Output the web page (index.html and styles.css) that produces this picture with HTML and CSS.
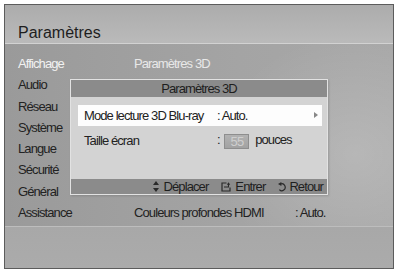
FILE: index.html
```html
<!DOCTYPE html>
<html lang="fr">
<head>
    <meta charset="UTF-8">
    <title>Paramètres</title>
    <link rel="stylesheet" href="styles.css">
</head>
<body>
    <div class="screen">
        <div class="title-bar">Paramètres</div>

        <div class="main">
            <ul class="menu">
                <li class="active">Affichage</li>
                <li>Audio</li>
                <li>Réseau</li>
                <li>Système</li>
                <li>Langue</li>
                <li>Sécurité</li>
                <li>Général</li>
                <li>Assistance</li>
            </ul>
            <div class="options">
                <div class="option dim">Paramètres 3D</div>
                <div class="option spacer"></div>
                <div class="option">
                    <span class="opt-name">Couleurs profondes HDMI</span>
                    <span class="opt-value">: Auto.</span>
                </div>
            </div>

            <!-- popup over the menu -->
            <div class="dialog">
                <div class="dialog-head">Paramètres 3D</div>
                <div class="dialog-body">
                    <div class="row selected">
                        <span class="row-name">Mode lecture 3D Blu-ray</span>
                        <span class="row-value">: Auto.</span>
                        <span class="arrow"></span>
                    </div>
                    <div class="row">
                        <span class="row-name">Taille écran</span>
                        <span class="row-value">: <span class="num-box">55</span> pouces</span>
                    </div>
                </div>
                <div class="dialog-foot">
                    <span class="hint move">
                        <svg width="6" height="11" viewBox="0 0 6 11"><path d="M3 0 L6 4 H0 Z M0 7 H6 L3 11 Z" fill="#2a2a2a"/></svg>
                        Déplacer
                    </span>
                    <span class="hint enter">
                        <svg width="10" height="10" viewBox="0 0 10 10"><path d="M5.5 1 H1 V9 H9 V5.5" fill="none" stroke="#2a2a2a" stroke-width="1.2"/><path d="M3 5 H7.5 V2" fill="none" stroke="#2a2a2a" stroke-width="1.1"/><path d="M5.8 2.8 L7.5 0.3 L9.2 2.8 Z" fill="#2a2a2a"/></svg>
                        Entrer
                    </span>
                    <span class="hint">
                        <svg width="8" height="10" viewBox="0 0 8 10"><path d="M2.6 2 A3.3 3.5 0 1 1 1.4 7.6" fill="none" stroke="#2a2a2a" stroke-width="1.2"/><path d="M0 2 L3.4 0 L3.4 4 Z" fill="#2a2a2a"/></svg>
                        Retour
                    </span>
                </div>
            </div>
        </div>

        <div class="bottom"></div>
    </div>
</body>
</html>
```

FILE: styles.css
```css
body {
    margin: 0;
    background: #fff;
    font-family: "Liberation Sans", Arial, sans-serif;
    font-size: 13px;
    letter-spacing: -0.9px;
    color: #222;
}

.screen {
    margin: 4px;
    width: 388px;
    height: 263px;
    border: 1px solid #5c5c5c;
    display: flex;
    flex-direction: column;
    background: #a6a6a6;
}

.title-bar {
    height: 39px;
    box-sizing: border-box;
    padding: 19px 0 0 13px;
    font-size: 16px;
    letter-spacing: 0;
    color: #1e1e1e;
    background: linear-gradient(to bottom, #acacac, #bababa);
    border-bottom: 1px solid #d2d2d2;
}

.main {
    position: relative;
    height: 182px;
    display: flex;
    background:
        radial-gradient(ellipse 140px 120px at 350px 110px, rgba(255,255,255,0.18), rgba(255,255,255,0)),
        linear-gradient(to right, #9a9a9a, #a4a4a4 60%, #a8a8a8);
    border-bottom: 1px solid #bdbdbd;
}

.menu {
    list-style: none;
    margin: 0;
    padding: 9px 0 0 13px;
    width: 116px;
}

.menu li {
    height: 21.3px;
    line-height: 21.3px;
}

.menu li.active {
    color: #f2f2f2;
}

.options {
    padding-top: 9px;
    flex: 1;
}

.option {
    height: 21.3px;
    line-height: 21.3px;
    display: flex;
}

.option.dim {
    color: #e8e8e8;
}

.option.spacer {
    height: 127.8px;
}

.opt-name {
    width: 161px;
}

.dialog {
    position: absolute;
    left: 65px;
    top: 35px;
    width: 256px;
    border: 1px solid #e2e2e2;
    background: #d3d3d3;
    box-shadow: 1px 1px 2px rgba(0,0,0,0.15);
}

.dialog-head {
    height: 17px;
    line-height: 17px;
    text-align: center;
    background: #8b8b8b;
    color: #1e1e1e;
}

.dialog-body {
    padding: 8px 5px 9px 7px;
    height: 65px;
}

.row {
    height: 21px;
    display: flex;
    align-items: center;
    padding-left: 6px;
    position: relative;
}

.row.selected {
    background: #fdfdfd;
    margin-bottom: 4px;
}

.row-name {
    width: 133px;
}

.num-box {
    display: inline-block;
    width: 23px;
    height: 13px;
    line-height: 13px;
    margin: 0 3px 0 2px;
    text-align: center;
    color: #cfcfcf;
    background: linear-gradient(to bottom, #b2b2b2, #a2a2a2);
    border: 1px solid #8e8e8e;
    vertical-align: middle;
}

.arrow {
    position: absolute;
    right: 4px;
    top: 7px;
    border-left: 4px solid #888;
    border-top: 3.5px solid transparent;
    border-bottom: 3.5px solid transparent;
}

.dialog-foot {
    height: 15px;
    background: #8b8b8b;
    display: flex;
    justify-content: flex-end;
    align-items: center;
    gap: 13px;
    padding-right: 4px;
    color: #1e1e1e;
}

.hint {
    display: flex;
    align-items: center;
    gap: 3px;
}

.hint.move {
    gap: 5px;
}

.hint.enter {
    gap: 4px;
}

.bottom {
    flex: 1;
    background: linear-gradient(to bottom, #a8a8a8, #ababab);
}
```
